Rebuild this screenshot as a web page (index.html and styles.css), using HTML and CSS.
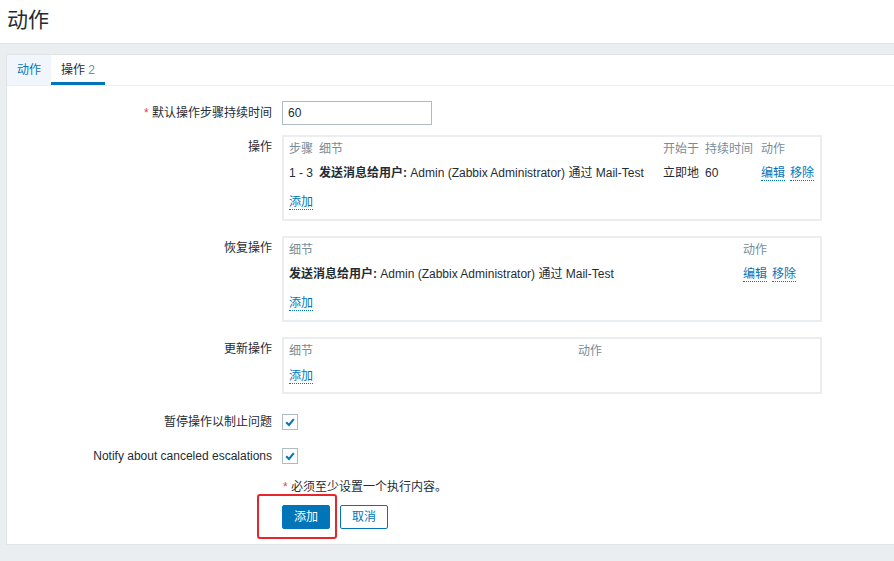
FILE: index.html
```html
<!DOCTYPE html>
<html lang="zh">
<head>
<meta charset="utf-8">
<title>动作</title>
<link rel="stylesheet" href="styles.css">
</head>
<body>
<header class="page-header">
  <h1 class="page-title">动作</h1>
</header>
<main class="panel">
  <nav class="tabs">
    <a class="tab tab-hover">动作</a>
    <a class="tab tab-active">操作 <span class="tab-count">2</span></a>
  </nav>
  <form class="form">
    <div class="row row-input">
      <label class="label"><span class="req">*</span> 默认操作步骤持续时间</label>
      <div class="field"><input class="text-input" type="text" value="60"></div>
    </div>

    <div class="row row-box">
      <div class="label label-top">操作</div>
      <div class="field">
        <div class="box">
          <div class="grid grid-ops head">
            <span>步骤</span><span>细节</span><span>开始于</span><span>持续时间</span><span>动作</span>
          </div>
          <div class="grid grid-ops data">
            <span>1 - 3</span>
            <span><b>发送消息给用户:</b> Admin (Zabbix Administrator) 通过 Mail-Test</span>
            <span>立即地</span>
            <span>60</span>
            <span class="actions"><a class="link">编辑</a><a class="link">移除</a></span>
          </div>
          <div class="add"><a class="link">添加</a></div>
        </div>
      </div>
    </div>

    <div class="row row-box row-gap">
      <div class="label label-top">恢复操作</div>
      <div class="field">
        <div class="box">
          <div class="grid grid-rec head">
            <span>细节</span><span>动作</span>
          </div>
          <div class="grid grid-rec data">
            <span><b>发送消息给用户:</b> Admin (Zabbix Administrator) 通过 Mail-Test</span>
            <span class="actions"><a class="link">编辑</a><a class="link">移除</a></span>
          </div>
          <div class="add"><a class="link">添加</a></div>
        </div>
      </div>
    </div>

    <div class="row row-box row-gap">
      <div class="label label-top">更新操作</div>
      <div class="field">
        <div class="box box-empty">
          <div class="grid grid-upd head">
            <span>细节</span><span>动作</span>
          </div>
          <div class="add add-empty"><a class="link">添加</a></div>
        </div>
      </div>
    </div>

    <div class="row row-check row-check-1">
      <label class="label">暂停操作以制止问题</label>
      <div class="field"><span class="checkbox"><svg viewBox="0 0 16 16" width="16" height="16"><path d="M4.2 8.2 L7 11 L11.8 5.2" fill="none" stroke="#0275b8" stroke-width="2"/></svg></span></div>
    </div>

    <div class="row row-check row-check-2">
      <label class="label">Notify about canceled escalations</label>
      <div class="field"><span class="checkbox"><svg viewBox="0 0 16 16" width="16" height="16"><path d="M4.2 8.2 L7 11 L11.8 5.2" fill="none" stroke="#0275b8" stroke-width="2"/></svg></span></div>
    </div>

    <div class="row row-note">
      <div class="label"></div>
      <div class="field note"><span class="req">*</span> 必须至少设置一个执行内容。</div>
    </div>

    <div class="row row-buttons">
      <div class="label"></div>
      <div class="field buttons">
        <button type="button" class="btn btn-primary">添加</button>
        <button type="button" class="btn btn-alt">取消</button>
        <span class="highlight"></span>
      </div>
    </div>
  </form>
</main>
</body>
</html>
```

FILE: styles.css
```css
html, body {
  margin: 0;
  padding: 0;
  overflow: hidden;
}
body {
  background: #ebeef0;
  color: #1f2c33;
  font-family: "Liberation Sans", Arial, "Noto Sans CJK SC", sans-serif;
  font-size: 12px;
  line-height: 14px;
}
.page-header {
  background: #ffffff;
  height: 43px;
  border-bottom: 1px solid #dfe4e7;
  box-sizing: content-box;
}
.page-title {
  margin: 0;
  padding: 8px 0 0 7px;
  height: 24px;
  font-size: 21px;
  line-height: 24px;
  font-weight: normal;
  color: #1f2c33;
}
.panel {
  display: block;
  margin: 10px -10px 0 6px;
  background: #ffffff;
  border: 1px solid #dfe4e7;
  padding-bottom: 15px;
}
.tabs {
  display: flex;
  height: 30px;
  border-bottom: 1px solid #ebeef0;
}
.tab {
  display: block;
  padding: 0 10px;
  line-height: 30px;
  height: 30px;
  box-sizing: border-box;
  color: #1f2c33;
}
.tab-hover {
  background: #f0f6fb;
  color: #0275b8;
}
.tab-active {
  border-bottom: 3px solid #0275b8;
}
.tab-count {
  color: #768d99;
}
.form {
  padding-top: 15px;
}
.row {
  display: grid;
  grid-template-columns: 265px 540px;
  column-gap: 10px;
}
.label {
  text-align: right;
  white-space: nowrap;
  height: 14px;
}
.label-top {
  padding-top: 5px;
}
.req {
  color: #e54545;
}
.row-input {
  align-items: center;
  height: 24px;
}
.text-input {
  display: block;
  width: 150px;
  height: 24px;
  box-sizing: border-box;
  border: 1px solid #acbbc4;
  padding: 0 5px;
  margin: 0;
  font: inherit;
  color: #1f2c33;
  background: #fff;
  outline: none;
}
.row-box {
  margin-top: 10px;
}
.row-gap {
  margin-top: 15px;
}
.box {
  border: 2px solid #ebeef0;
  padding: 5px 5px 10px 5px;
}
.box-empty {
  padding-bottom: 9px;
}
.grid {
  display: grid;
  white-space: nowrap;
  height: 14px;
}
.grid > span {
  display: block;
  height: 14px;
  overflow: visible;
}
.grid-ops {
  grid-template-columns: 30px 344px 42px 56px auto;
}
.grid-rec {
  grid-template-columns: 454px auto;
}
.grid-upd {
  grid-template-columns: 289px auto;
}
.head {
  color: #768d99;
  margin-bottom: 10px;
}
.data b {
  font-weight: bold;
}
.actions {
  display: flex !important;
  gap: 5px;
}
.link {
  display: block;
  float: left;
  height: 14px;
  color: #0275b8;
  border-bottom: 1px dotted #0275b8;
  line-height: 14px;
  cursor: pointer;
}
.add {
  margin-top: 15px;
  height: 14px;
}
.add-empty {
  margin-top: 11px;
}
.row-check {
  align-items: center;
  height: 16px;
}
.row-check-1 {
  margin-top: 20px;
}
.row-check-2 {
  margin-top: 18px;
}
.checkbox {
  display: block;
  width: 16px;
  height: 16px;
  box-sizing: border-box;
  border: 1px solid #acbbc4;
  background: #fff;
  position: relative;
}
.checkbox svg {
  position: absolute;
  left: -1px;
  top: -1px;
}
.row-note {
  margin-top: 16px;
  height: 14px;
}
.note {
  padding-left: 1px;
  height: 14px;
}
.row-buttons {
  margin-top: 11px;
}
.buttons {
  position: relative;
  display: flex;
  gap: 10px;
  height: 24px;
}
.btn {
  height: 24px;
  width: 48px;
  padding: 0;
  margin: 0;
  box-sizing: border-box;
  border-radius: 2px;
  font: inherit;
  cursor: pointer;
}
.btn-primary {
  background: #0275b8;
  border: 1px solid #0275b8;
  color: #ffffff;
}
.btn-alt {
  background: #ffffff;
  border: 1px solid #0275b8;
  color: #0275b8;
}
.highlight {
  position: absolute;
  left: -25px;
  top: -11px;
  width: 80px;
  height: 45px;
  box-sizing: border-box;
  border: 2px solid #e8252a;
  border-radius: 3px;
  pointer-events: none;
}
```
